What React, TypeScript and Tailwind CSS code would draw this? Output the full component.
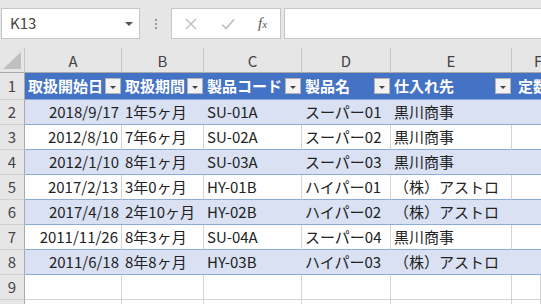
const font = { fontFamily: '"Noto Sans CJK JP", "Noto Sans", sans-serif' };

type Row = [string, string, string, string, string];

const rows: Row[] = [
  ["2018/9/17", "1年5ヶ月", "SU-01A", "スーパー01", "黒川商事"],
  ["2012/8/10", "7年6ヶ月", "SU-02A", "スーパー02", "黒川商事"],
  ["2012/1/10", "8年1ヶ月", "SU-03A", "スーパー03", "黒川商事"],
  ["2017/2/13", "3年0ヶ月", "HY-01B", "ハイパー01", "（株）アストロ"],
  ["2017/4/18", "2年10ヶ月", "HY-02B", "ハイパー02", "（株）アストロ"],
  ["2011/11/26", "8年3ヶ月", "SU-04A", "スーパー04", "黒川商事"],
  ["2011/6/18", "8年8ヶ月", "HY-03B", "ハイパー03", "（株）アストロ"],
];

const cols = "grid-cols-[25px_97px_82px_98px_89px_121px_1fr]";

function FilterButton() {
  return (
    <div className="flex h-4 w-4 shrink-0 items-end justify-center border border-[#b3b3b3] bg-[#f3f3f3] pb-[4px]">
      <div className="h-0 w-0 border-x-[3px] border-t-[3px] border-x-transparent border-t-[#444]" />
    </div>
  );
}

function RowHead({ n, h = "h-[25px]" }: { n?: number; h?: string }) {
  return (
    <div
      className={`flex ${h} items-center justify-center border-b border-r border-b-[#d0d0d0] border-r-[#a9a9a9] bg-[#e6e6e6] text-[15px] text-[#444]`}
    >
      {n}
    </div>
  );
}

export default function App() {
  return (
    <div className="h-[304px] w-[541px] overflow-hidden bg-[#e6e6e6] text-[#222]" style={font}>
      {/* Formula bar */}
      <div className="flex h-12 items-start pt-2">
        <div className="ml-px flex h-[31px] w-[139px] items-center border border-[#c6c6c6] bg-white pl-[8px] pr-[6px]">
          <span className="text-[15px] text-[#444]">K13</span>
          <div className="ml-auto h-0 w-0 border-x-[4px] border-t-[4px] border-x-transparent border-t-[#555]" />
        </div>
        <div className="flex h-[31px] w-[31px] flex-col items-center justify-center gap-[2px]">
          <div className="h-[2px] w-[2px] bg-[#999]" />
          <div className="h-[2px] w-[2px] bg-[#999]" />
          <div className="h-[2px] w-[2px] bg-[#999]" />
        </div>
        <div className="flex h-[31px] w-[110px] items-center border border-[#c6c6c6] bg-white">
          <svg width="12" height="12" viewBox="0 0 12 12" className="ml-[13px]">
            <path d="M1 1 L11 11 M11 1 L1 11" stroke="#bdbdbd" strokeWidth="1.3" fill="none" />
          </svg>
          <svg width="14" height="12" viewBox="0 0 14 12" className="ml-[24px]">
            <path d="M1 6.5 L5 10.5 L13 1.5" stroke="#bdbdbd" strokeWidth="1.6" fill="none" />
          </svg>
          <span
            className="ml-[23px] text-[15px] italic text-[#555]"
            style={{ fontFamily: '"Liberation Serif", serif' }}
          >
            f<span className="text-[11px]">x</span>
          </span>
        </div>
        <div className="ml-[3px] h-[31px] flex-1 border border-r-0 border-[#c6c6c6] bg-white" />
      </div>

      {/* Sheet */}
      <div className={`grid ${cols} bg-white`}>
        {/* column headers */}
        <div className="relative h-[25px] border-b border-r border-b-[#a9a9a9] border-r-[#c6c6c6] bg-[#e6e6e6]">
          <svg width="18" height="17" className="absolute bottom-[3px] right-[3px]">
            <polygon points="0,17 18,17 18,0" fill="#bfbfbf" />
          </svg>
        </div>
        {["A", "B", "C", "D", "E"].map((c) => (
          <div
            key={c}
            className="flex h-[25px] items-center justify-center border-b border-r border-b-[#a9a9a9] border-r-[#c6c6c6] bg-[#e6e6e6] pt-[2px] text-[15px] text-[#444]"
          >
            {c}
          </div>
        ))}
        <div className="flex h-[25px] items-center overflow-hidden border-b border-b-[#a9a9a9] bg-[#e6e6e6] pl-[22px] pt-[2px] text-[15px] text-[#444]">
          F
        </div>

        {/* row 1: table header */}
        <RowHead n={1} h="h-[27px]" />
        {["取扱開始日", "取扱期間", "製品コード", "製品名", "仕入れ先"].map((t) => (
          <div
            key={t}
            className="flex h-[27px] items-center overflow-hidden whitespace-nowrap border-b border-b-[#8ea9db] bg-[#4472c4] pl-[3px] pr-[1px] text-[15px] font-bold text-white"
          >
            <span>{t}</span>
            <div className="ml-auto">
              <FilterButton />
            </div>
          </div>
        ))}
        <div className="flex h-[27px] items-center overflow-hidden whitespace-nowrap border-b border-b-[#8ea9db] bg-[#4472c4] pl-[6px] text-[15px] font-bold text-white">
          定数
        </div>

        {/* data rows */}
        {rows.map((r, i) => {
          const band = i % 2 === 0;
          const cell = band
            ? "bg-[#d9e1f2] border-b border-b-[#8ea9db]"
            : "bg-white border-b border-b-[#8ea9db] border-r border-r-[#d4d4d4]";
          return [
            <RowHead key={`h${i}`} n={i + 2} />,
            <div key={`a${i}`} className={`flex h-[25px] items-center justify-end whitespace-nowrap pr-[3px] text-[15px] ${cell}`}>
              {r[0]}
            </div>,
            ...r.slice(1).map((v, j) => (
              <div key={`c${i}${j}`} className={`flex h-[25px] items-center whitespace-nowrap pl-[3px] text-[15px] ${cell}`}>
                {v}
              </div>
            )),
            <div key={`f${i}`} className={`h-[25px] ${cell} border-r-0`} />,
          ];
        })}

        {/* rows 9 and 10 */}
        {[9, 10].map((n) => [
          <RowHead key={`h${n}`} n={n === 9 ? n : undefined} />,
          ...[0, 1, 2, 3, 4, 5].map((j) => (
            <div key={`e${n}${j}`} className="h-[25px] border-b border-r border-b-[#d4d4d4] border-r-[#d4d4d4] bg-white" />
          )),
        ])}
      </div>
    </div>
  );
}
